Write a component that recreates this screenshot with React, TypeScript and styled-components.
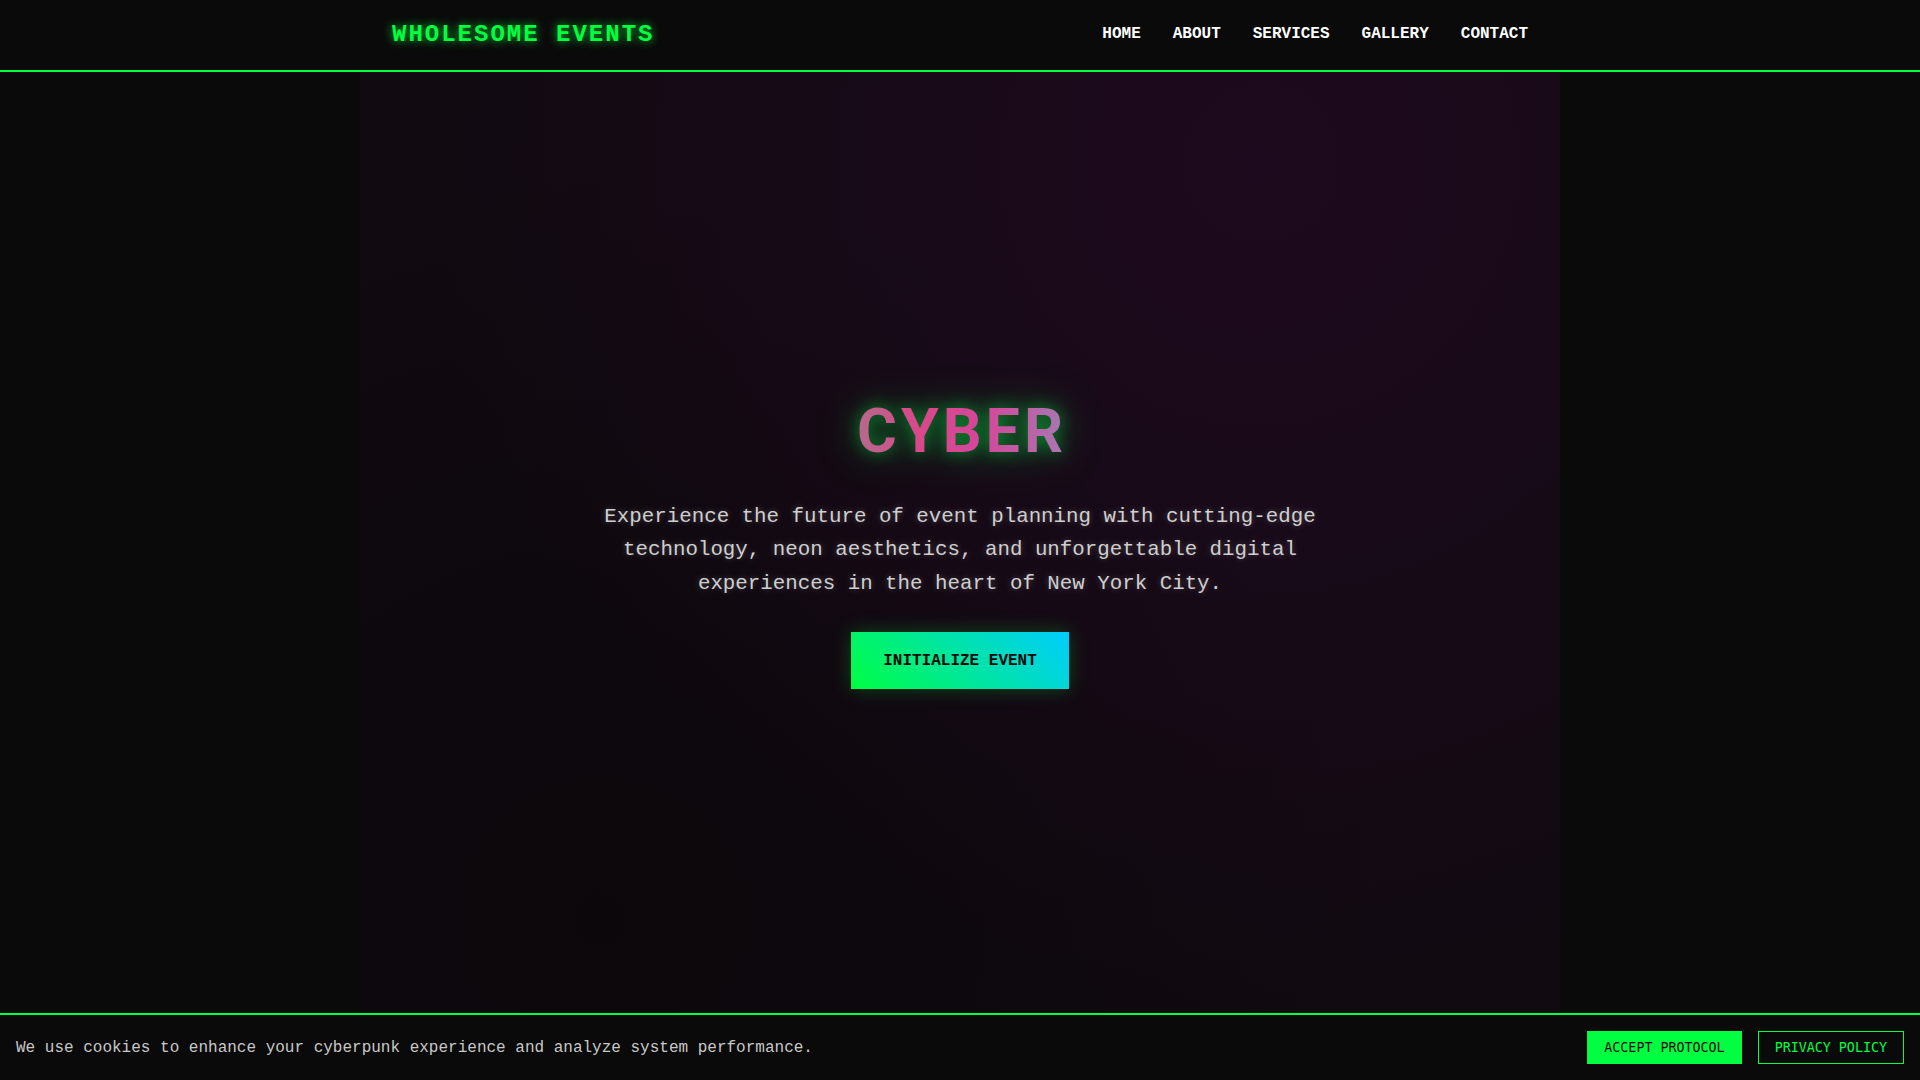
import React from "react";
import styled, { createGlobalStyle } from "styled-components";

const GlobalStyle = createGlobalStyle`
  * { box-sizing: border-box; }
  html, body { margin: 0; padding: 0; }
  body {
    background: #0a0a0a;
    color: #e0e0e0;
    font-family: "Liberation Mono", "Courier New", monospace;
    overflow: hidden;
  }
`;

const Header = styled.header`
  position: fixed;
  top: 0;
  left: 0;
  right: 0;
  z-index: 10;
  background: #0a0a0a;
  border-bottom: 2px solid #00ff41;
`;

const HeaderInner = styled.div`
  max-width: 1200px;
  height: 70px;
  margin: 0 auto;
  padding: 0 32px;
  display: flex;
  align-items: center;
  justify-content: space-between;
`;

const Logo = styled.div`
  font-family: "Liberation Mono", "Courier New", monospace;
  font-weight: 700;
  font-size: 24px;
  letter-spacing: 2px;
  color: #00ff41;
  text-shadow: 0 0 10px rgba(0, 255, 65, 0.8);
  margin-top: -2px;
`;

const Nav = styled.nav`
  display: flex;
  gap: 32px;
  margin-top: -3px;
`;

const NavLink = styled.a`
  font-family: "Liberation Mono", "Courier New", monospace;
  font-weight: 700;
  font-size: 16px;
  color: #ffffff;
  text-decoration: none;
  text-transform: uppercase;
`;

const Hero = styled.section`
  max-width: 1200px;
  min-height: 100vh;
  margin: 0 auto;
  padding-top: 4.5px;
  display: flex;
  flex-direction: column;
  align-items: center;
  justify-content: center;
  text-align: center;
  background:
    radial-gradient(ellipse at 75% 15%, rgba(40, 10, 40, 0.55), transparent 65%),
    radial-gradient(ellipse at 20% 85%, rgba(5, 5, 5, 0.5), transparent 60%),
    #110a11;
`;

const TitleGlow = styled.div`
  filter: drop-shadow(0 0 8px rgba(0, 255, 65, 0.5)) drop-shadow(0 0 20px rgba(0, 200, 60, 0.4));
  margin-bottom: 33px;
`;

const Title = styled.h1`
  margin: 0;
  font-family: Roboto, "Liberation Sans", Arial, sans-serif;
  font-weight: 700;
  font-size: 61px;
  line-height: 72px;
  letter-spacing: 4px;
  padding-left: 4px;
  background: linear-gradient(90deg, #b46c8c 0%, #d8488a 30%, #d6469a 60%, #a679b2 100%);
  -webkit-background-clip: text;
  background-clip: text;
  -webkit-text-fill-color: transparent;
  color: transparent;
`;

const Lead = styled.p`
  margin: 0 0 32.5px;
  max-width: 800px;
  font-family: "Liberation Mono", "Courier New", monospace;
  font-size: 20.8px;
  line-height: 33.28px;
  color: #cfcfcf;
  text-shadow: 0 0 6px rgba(255, 255, 255, 0.25);
`;

const CtaButton = styled.button`
  font-family: "Liberation Mono", "Courier New", monospace;
  font-weight: 700;
  font-size: 16px;
  line-height: 18px;
  color: #0a0a0a;
  padding: 19.5px 32px;
  border: none;
  cursor: pointer;
  background: linear-gradient(45deg, #00ff41, #00ccff);
  box-shadow: 0 0 20px rgba(0, 255, 65, 0.25);
`;

const CookieBar = styled.div`
  position: fixed;
  left: 0;
  right: 0;
  bottom: 0;
  z-index: 10;
  background: #0a0a0a;
  border-top: 2px solid #00ff41;
  padding: 16px;
  display: flex;
  align-items: center;
  justify-content: space-between;
`;

const CookieText = styled.p`
  margin: 0;
  font-family: "Liberation Mono", "Courier New", monospace;
  font-size: 16px;
  color: #c8c8c8;
`;

const CookieActions = styled.div`
  display: flex;
  gap: 16px;
`;

const CookieButton = styled.button<{ $primary?: boolean }>`
  font-family: "DejaVu Sans Mono", monospace;
  font-size: 13.33px;
  line-height: 15px;
  padding: 8px 16px;
  cursor: pointer;
  border: 1px solid #00ff41;
  background: ${(p) => (p.$primary ? "#00ff41" : "transparent")};
  color: ${(p) => (p.$primary ? "#0a0a0a" : "#00ff41")};
`;

const links = ["Home", "About", "Services", "Gallery", "Contact"];

export default function App() {
  return (
    <>
      <GlobalStyle />
      <Header>
        <HeaderInner>
          <Logo>WHOLESOME EVENTS</Logo>
          <Nav>
            {links.map((l) => (
              <NavLink key={l} href="#">
                {l}
              </NavLink>
            ))}
          </Nav>
        </HeaderInner>
      </Header>
      <Hero>
        <TitleGlow>
          <Title>CYBER</Title>
        </TitleGlow>
        <Lead>
          Experience the future of event planning with cutting-edge technology, neon aesthetics, and
          unforgettable digital experiences in the heart of New York City.
        </Lead>
        <CtaButton>INITIALIZE EVENT</CtaButton>
      </Hero>
      <CookieBar>
        <CookieText>
          We use cookies to enhance your cyberpunk experience and analyze system performance.
        </CookieText>
        <CookieActions>
          <CookieButton $primary>ACCEPT PROTOCOL</CookieButton>
          <CookieButton>PRIVACY POLICY</CookieButton>
        </CookieActions>
      </CookieBar>
    </>
  );
}
